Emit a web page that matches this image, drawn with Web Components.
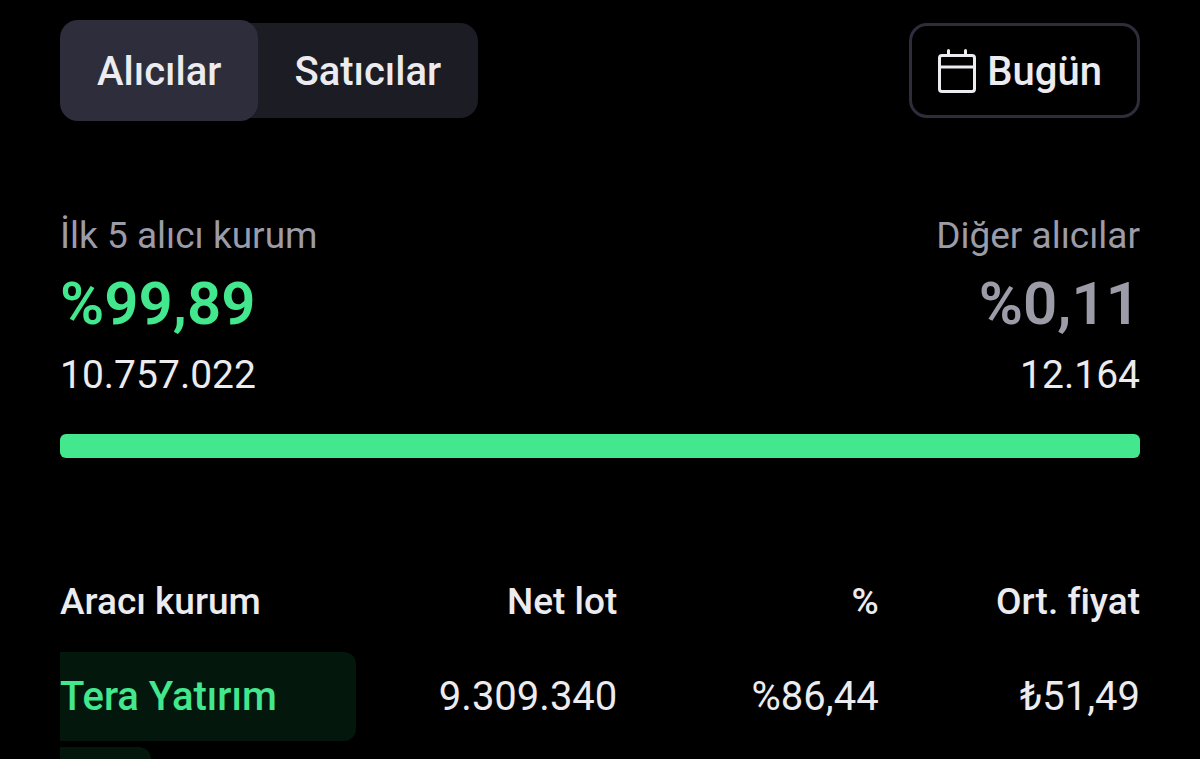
<!DOCTYPE html>
<html lang="tr">
<head>
<meta charset="utf-8">
<meta name="viewport" content="width=device-width, initial-scale=1">
<title>Aracı kurum dağılımı</title>
<style>
    html {
        --surface: #1c1c25;
        --surface-active: #2d2d3c;
        --text: #ebebf0;
        --muted: #9c9ba8;
        --green: #43e78e;
        --green-dim: #03170d;
        background: #000;
    }
    body {
        margin: 0;
        background: #000;
        color: var(--text);
        font-family: Roboto, "Noto Sans", sans-serif;
    }
</style>
</head>
<body>
<broker-view></broker-view>

<script>
class SideTabs extends HTMLElement {

    constructor() {
        super();
        this.root = this.attachShadow({mode: 'open'});
    }

    connectedCallback() {
        this.root.innerHTML =
            `<style>
                :host { display: flex; background: var(--surface); border-radius: 18px; }
                ::slotted(button) {
                    border: 0;
                    padding: 25px 37px 23px 36px;
                    border-radius: 18px;
                    background: none;
                    color: inherit;
                    font: 500 40px/47px Roboto, sans-serif;
                    cursor: pointer;
                }
                ::slotted(button[aria-pressed=true]) {
                    margin: -3px 0;
                    padding: 28px 37px 26px;
                    background: var(--surface-active);
                }
            </style>
            <slot></slot>`;
        this.addEventListener('click', e => this._select(e.target.closest('button')));
    }

    _select(button) {
        if (!button) return;
        this.querySelectorAll('button').forEach(b => b.setAttribute('aria-pressed', b === button));
    }
}

class DateButton extends HTMLElement {

    constructor() {
        super();
        this.root = this.attachShadow({mode: 'open'});
    }

    connectedCallback() {
        this.root.innerHTML =
            `<style>
                :host { display: block; }
                button {
                    display: flex;
                    align-items: center;
                    gap: 11px;
                    padding: 22px 35px 20px 26px;
                    border: 3px solid var(--surface-active);
                    border-radius: 18px;
                    background: none;
                    color: inherit;
                    font: 500 40px/47px Roboto, sans-serif;
                    cursor: pointer;
                }
                svg { display: block; }
            </style>
            <button type="button">
                <svg width="38" height="46" viewBox="0 0 38 46" fill="none" stroke="currentColor" stroke-width="3" stroke-linecap="round" aria-hidden="true">
                    <rect x="1.5" y="6.5" width="35" height="36" rx="2.500"/>
                    <path d="M1.5 18H36.5M10.500 6V1.500M27.500 6V1.500"/>
                </svg>
                <slot></slot>
            </button>`;
    }
}

class ShareStat extends HTMLElement {

    constructor() {
        super();
        this.root = this.attachShadow({mode: 'open'});
    }

    connectedCallback() {
        this.root.innerHTML =
            `<style>
                :host { display: block; color: var(--muted); }
                :host([align=end]) { text-align: right; }
                .label { font-size: 37px; line-height: 44px; }
                .share { font-size: 60px; line-height: 70px; font-weight: 600; margin-top: 11px; }
                :host([accent]) .share { color: var(--green); }
                .lots { font-size: 39px; line-height: 48px; margin-top: 12px; color: var(--text); }
            </style>
            <div class="label"><slot></slot></div>
            <div class="share">${this.getAttribute('share')}</div>
            <div class="lots">${this.getAttribute('lots')}</div>`;
    }
}

class ShareBar extends HTMLElement {

    constructor() {
        super();
        this.root = this.attachShadow({mode: 'open'});
    }

    connectedCallback() {
        this.root.innerHTML =
            `<style>
                :host { display: block; height: 24px; border-radius: 6px; overflow: hidden; background: var(--muted); }
                div { height: 100%; width: ${this.getAttribute('value')}%; background: var(--green); }
            </style>
            <div></div>`;
    }
}

class BrokerTable extends HTMLElement {

    constructor() {
        super();
        this.root = this.attachShadow({mode: 'open'});
        this.rows = [
            {name: 'Tera Yatırım', lot: '9.309.340', percent: '%86,44', price: '₺51,49', bar: 296}
        ];
    }

    connectedCallback() {
        this.root.innerHTML =
            `<style>
                :host { display: block; }
                table { width: 100%; table-layout: fixed; border-collapse: collapse; }
                th, td { padding: 0; text-align: right; white-space: nowrap; }
                th:first-child, td:first-child { width: 296px; text-align: left; }
                th { font-size: 37px; line-height: 44px; font-weight: 500; padding-bottom: 28px; }
                td { font-size: 40px; line-height: 89px; padding-bottom: 6px; }
                .bar {
                    height: 89px;
                    border-radius: 0 12px 12px 0;
                    background: var(--green-dim);
                    color: var(--green);
                    font-weight: 500;
                }
                /* top edge of the next row's bar */
                .peek { width: 91px; height: 12px; border-radius: 0 12px 0 0; background: var(--green-dim); }
            </style>
            <table>
                <thead>
                    <tr><th>Aracı kurum</th><th>Net lot</th><th>%</th><th>Ort. fiyat</th></tr>
                </thead>
                <tbody>${this.rows.map(r => this._row(r)).join('')}</tbody>
            </table>
            <div class="peek"></div>`;
    }

    _row(r) {
        return `<tr>
            <td><div class="bar" style="width: ${r.bar}px">${r.name}</div></td>
            <td>${r.lot}</td><td>${r.percent}</td><td>${r.price}</td>
        </tr>`;
    }
}

class BrokerView extends HTMLElement {

    constructor() {
        super();
        this.root = this.attachShadow({mode: 'open'});
    }

    connectedCallback() {
        this.root.innerHTML =
            `<style>
                :host { display: block; padding: 23px 60px 0; }
                header, section { display: flex; justify-content: space-between; align-items: center; }
                section { margin-top: 96px; }
                share-bar { margin-top: 35px; }
                broker-table { margin-top: 122px; }
            </style>
            <header>
                <side-tabs>
                    <button type="button" aria-pressed="true">Alıcılar</button>
                    <button type="button" aria-pressed="false">Satıcılar</button>
                </side-tabs>
                <date-button>Bugün</date-button>
            </header>
            <section>
                <share-stat accent share="%99,89" lots="10.757.022">İlk 5 alıcı kurum</share-stat>
                <share-stat align="end" share="%0,11" lots="12.164">Diğer alıcılar</share-stat>
            </section>
            <share-bar value="100"></share-bar>
            <broker-table></broker-table>`;
    }
}

customElements.define('side-tabs', SideTabs);
customElements.define('date-button', DateButton);
customElements.define('share-stat', ShareStat);
customElements.define('share-bar', ShareBar);
customElements.define('broker-table', BrokerTable);
customElements.define('broker-view', BrokerView);
</script>
</body>
</html>
